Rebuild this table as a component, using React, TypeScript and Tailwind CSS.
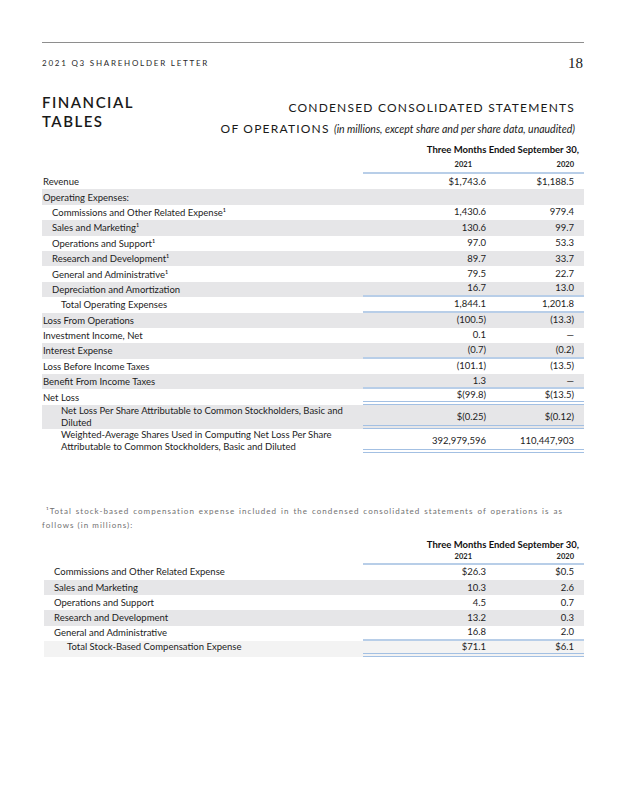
import React from "react";

type Row = {
  label: React.ReactNode;
  a: string;
  b: string;
  indent?: 0 | 1 | 2;
  line?: "single" | "double";
  two?: boolean;
};

const rows1: Row[] = [
  { label: "Revenue", a: "$1,743.6", b: "$1,188.5" },
  { label: "Operating Expenses:", a: "", b: "" },
  { label: "Commissions and Other Related Expense¹", a: "1,430.6", b: "979.4", indent: 1 },
  { label: "Sales and Marketing¹", a: "130.6", b: "99.7", indent: 1 },
  { label: "Operations and Support¹", a: "97.0", b: "53.3", indent: 1 },
  { label: "Research and Development¹", a: "89.7", b: "33.7", indent: 1 },
  { label: "General and Administrative¹", a: "79.5", b: "22.7", indent: 1 },
  { label: "Depreciation and Amortization", a: "16.7", b: "13.0", indent: 1, line: "single" },
  { label: "Total Operating Expenses", a: "1,844.1", b: "1,201.8", indent: 2, line: "single" },
  { label: "Loss From Operations", a: "(100.5)", b: "(13.3)" },
  { label: "Investment Income, Net", a: "0.1", b: "—" },
  { label: "Interest Expense", a: "(0.7)", b: "(0.2)", line: "single" },
  { label: "Loss Before Income Taxes", a: "(101.1)", b: "(13.5)" },
  { label: "Benefit From Income Taxes", a: "1.3", b: "—", line: "single" },
  { label: "Net Loss", a: "$(99.8)", b: "$(13.5)", line: "double" },
  {
    label: (
      <>
        Net Loss Per Share Attributable to Common Stockholders, Basic and
        <br />
        Diluted
      </>
    ),
    a: "$(0.25)",
    b: "$(0.12)",
    indent: 2,
    line: "double",
    two: true,
  },
  {
    label: (
      <>
        Weighted-Average Shares Used in Computing Net Loss Per Share
        <br />
        Attributable to Common Stockholders, Basic and Diluted
      </>
    ),
    a: "392,979,596",
    b: "110,447,903",
    indent: 2,
    line: "double",
    two: true,
  },
];

const rows2: Row[] = [
  { label: "Commissions and Other Related Expense", a: "$26.3", b: "$0.5", indent: 1 },
  { label: "Sales and Marketing", a: "10.3", b: "2.6", indent: 1 },
  { label: "Operations and Support", a: "4.5", b: "0.7", indent: 1 },
  { label: "Research and Development", a: "13.2", b: "0.3", indent: 1 },
  { label: "General and Administrative", a: "16.8", b: "2.0", indent: 1, line: "single" },
];

function indentClass(i?: number) {
  if (i === 1) return "pl-[10px]";
  if (i === 2) return "pl-[19px]";
  return "pl-[1px]";
}

function TableRow({ r, gray }: { r: Row; gray: boolean }) {
  const lineCls =
    r.line === "single"
      ? "border-b-2 border-[#b8cee8]"
      : r.line === "double"
      ? "border-b-4 border-double border-[#a3c0e3]"
      : "";
  return (
    <div
      className={`flex ${r.two ? "h-[24px] items-start" : "h-[15.4px] items-center"} ${
        gray ? "bg-[#e6e6e8]" : "bg-white"
      }`}
    >
      <div className={`flex-1 ${indentClass(r.indent)} ${r.two ? "leading-[11.7px] pt-[0.5px]" : "leading-[15px]"}`}>
        {r.label}
      </div>
      <div className={`w-[221px] h-full flex ${r.two ? "items-end pb-[1px]" : "items-center"} ${lineCls}`}>
        <div className="w-[123px] text-right">{r.a}</div>
        <div className="w-[88px] text-right">{r.b}</div>
      </div>
    </div>
  );
}

function TableHead({ tight }: { tight?: boolean }) {
  return (
    <div className="flex justify-end">
      <div className="w-[221px]">
        <div className="text-right pr-[5px] text-[9.5px] font-bold leading-[14px] text-[#111]">
          Three Months Ended September 30,
        </div>
        <div
          className={`flex text-[7.5px] font-bold leading-[10px] text-[#222] ${tight ? "mt-0" : "mt-[3px]"}`}
        >
          <div className="w-[123px] text-right pr-[14px]">2021</div>
          <div className="w-[88px] text-right">2020</div>
        </div>
        <div className={`h-[2px] bg-[#b8cee8] ${tight ? "mt-[1px]" : "mt-[2px]"}`} />
      </div>
    </div>
  );
}

export default function App() {
  return (
    <div className="w-[626px] h-[810px] bg-white px-[42px] pt-[42px] font-['Lato','Noto_Sans',sans-serif] text-[#1c1c1c]">
      <div className="h-px bg-[#8e8e8e]" />
      <div className="flex justify-between items-center h-[20px] mt-[10px]">
        <div className="text-[8px] tracking-[0.22em] text-[#2a2a2a]">2021 Q3 SHAREHOLDER LETTER</div>
        <div className="font-['Liberation_Serif',serif] text-[15px] text-[#1a1a1a] pr-[1px]">18</div>
      </div>

      <div className="flex justify-between items-start mt-[20px] h-[44px]">
        <div className="text-[15px] font-semibold tracking-[0.1em] leading-[19px] text-[#1a1a1a]">
          FINANCIAL
          <br />
          TABLES
        </div>
        <div className="text-right pr-[9px] text-[12px] tracking-[0.1em] text-[#1a1a1a]">
          <div className="leading-[16px] mt-[7px]">CONDENSED CONSOLIDATED STATEMENTS</div>
          <div className="leading-[16px] mt-[5px]">
            OF OPERATIONS{" "}
            <span className="italic text-[10.5px] tracking-normal">
              (in millions, except share and per share data, unaudited)
            </span>
          </div>
        </div>
      </div>

      <div className="mt-[6px]">
        <TableHead />
      </div>
      <div className="text-[9.5px] text-[#1c1c1c]">
        {rows1.map((r, i) => (
          <TableRow key={i} r={r} gray={i % 2 === 1} />
        ))}
      </div>

      <div className="mt-[51px] w-[521px] text-[8px] tracking-[0.13em] leading-[14px] text-[#707070]">
        <div className="text-justify [text-align-last:justify] pl-[4px]">
          ¹Total stock-based compensation expense included in the condensed consolidated statements of operations is as
        </div>
        <div>follows (in millions):</div>
      </div>

      <div className="mt-[6px]">
        <TableHead tight />
      </div>
      <div className="text-[9.5px] text-[#1c1c1c] ml-[2px]">
        {rows2.map((r, i) => (
          <div key={i} className={`flex h-[15.2px] items-center ${i % 2 === 1 ? "bg-[#e6e6e8]" : "bg-white"}`}>
            <div className={`flex-1 ${indentClass(r.indent)}`}>{r.label}</div>
            <div
              className={`w-[221px] h-full flex items-center ${
                r.line === "single" ? "border-b-2 border-[#b8cee8]" : ""
              }`}
            >
              <div className="w-[123px] text-right">{r.a}</div>
              <div className="w-[88px] text-right">{r.b}</div>
            </div>
          </div>
        ))}
        <div className="flex h-[16px] items-start bg-[#f3f3f3]">
          <div className="flex-1 pl-[23px] leading-[12px]">Total Stock-Based Compensation Expense</div>
          <div className="w-[221px] h-full flex items-start border-b-4 border-double border-[#a3c0e3] leading-[12px]">
            <div className="w-[123px] text-right">$71.1</div>
            <div className="w-[88px] text-right">$6.1</div>
          </div>
        </div>
      </div>
    </div>
  );
}
